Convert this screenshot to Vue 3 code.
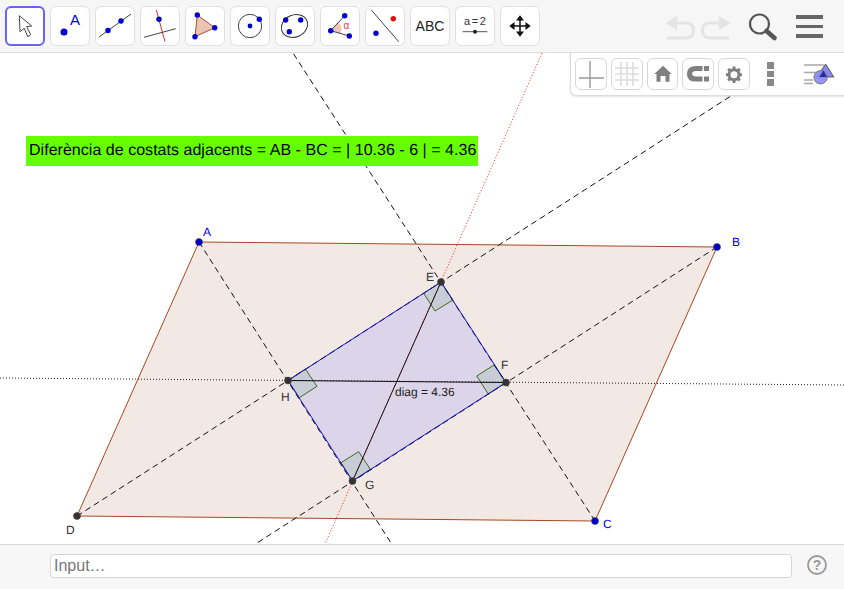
<script setup>
const dashedLines = [
  [77, 516, 843, 24],
  [595, 521, 293, 53],
  [199, 242, 391, 543],
  [717, 247, 257, 543],
]

const rightAngles = [
  '441,282 423.7,293.3 435,311 453,300',
  '506,382.5 494,365 476.7,376 488.3,394',
  '352.5,481 341,462.7 358.7,451.7 370.3,469.3',
  '288,380.5 305.3,369 317,386.3 299.3,397.7',
]

const points = [
  { x: 199, y: 242, color: '#0000cc', name: 'A', lx: 203, ly: 236, text: '#0000e6' },
  { x: 717, y: 247, color: '#0000cc', name: 'B', lx: 732, ly: 246, text: '#0000e6' },
  { x: 595, y: 521, color: '#0000cc', name: 'C', lx: 603, ly: 528, text: '#0000e6' },
  { x: 77, y: 516, color: '#333333', name: 'D', lx: 66, ly: 534, text: '#333333' },
  { x: 441, y: 282, color: '#333333', name: 'E', lx: 426, ly: 281, text: '#333333' },
  { x: 506, y: 382.5, color: '#333333', name: 'F', lx: 501, ly: 369, text: '#333333' },
  { x: 352.5, y: 481, color: '#333333', name: 'G', lx: 365, ly: 489, text: '#333333' },
  { x: 288, y: 380.5, color: '#333333', name: 'H', lx: 281, ly: 401, text: '#333333' },
]
</script>

<template>
  <div class="app">
    <header class="toolbar">
      <div class="tools">
        <button class="tool selected" type="button">
          <svg viewBox="0 0 38 38" width="38" height="38">
            <path d="M13.3 8.7 L14 24.7 L18.3 21.3 L21.7 29.7 L24.7 27.7 L20.7 19.7 L25.7 19 Z" fill="#fff" stroke="#444" stroke-width="1" />
          </svg>
        </button>
        <button class="tool" type="button">
          <svg viewBox="0 0 40 40" width="40" height="40">
            <circle cx="14" cy="26" r="3.5" fill="#0000cc" />
            <text x="20" y="19" class="icon-a">A</text>
          </svg>
        </button>
        <button class="tool" type="button">
          <svg viewBox="0 0 40 40" width="40" height="40">
            <line x1="4" y1="31" x2="36" y2="8" stroke="#444" />
            <circle cx="13" cy="24.5" r="2.7" fill="#0000cc" />
            <circle cx="26" cy="15" r="2.7" fill="#0000cc" />
          </svg>
        </button>
        <button class="tool" type="button">
          <svg viewBox="0 0 40 40" width="40" height="40">
            <line x1="16.3" y1="4" x2="25" y2="35.7" stroke="#e03030" />
            <line x1="4" y1="31.3" x2="35.7" y2="22.7" stroke="#444" />
            <circle cx="19" cy="13.3" r="2.7" fill="#0000cc" />
          </svg>
        </button>
        <button class="tool" type="button">
          <svg viewBox="0 0 40 40" width="40" height="40">
            <polygon points="12.3,9 29.7,21.7 10,30.7" fill="#ecc4b6" stroke="#a5522d" />
            <circle cx="12.3" cy="9" r="2.7" fill="#0000cc" />
            <circle cx="29.7" cy="21.7" r="2.7" fill="#0000cc" />
            <circle cx="10" cy="30.7" r="2.7" fill="#0000cc" />
          </svg>
        </button>
        <button class="tool" type="button">
          <svg viewBox="0 0 40 40" width="40" height="40">
            <circle cx="20" cy="20" r="11.7" fill="none" stroke="#444" />
            <circle cx="20" cy="20" r="2.4" fill="#0000cc" />
            <circle cx="29.3" cy="13.3" r="2.7" fill="#0000cc" />
          </svg>
        </button>
        <button class="tool" type="button">
          <svg viewBox="0 0 40 40" width="40" height="40">
            <ellipse cx="19.5" cy="20" rx="13.5" ry="11" transform="rotate(-25 19.5 20)" fill="none" stroke="#333" />
            <circle cx="10.7" cy="14" r="2.7" fill="#0000cc" />
            <circle cx="25.7" cy="14" r="2.7" fill="#0000cc" />
            <circle cx="14.3" cy="25.7" r="2.7" fill="#0000cc" />
          </svg>
        </button>
        <button class="tool" type="button">
          <svg viewBox="0 0 40 40" width="40" height="40">
            <path d="M10.7 24.7 L18 15.5 A11 11 0 0 1 20.5 27.5 Z" fill="#f2c4bc" />
            <line x1="10.7" y1="24.7" x2="24.7" y2="9.7" stroke="#444" />
            <line x1="10.7" y1="24.7" x2="29.3" y2="30" stroke="#444" />
            <circle cx="10.7" cy="24.7" r="2.7" fill="#0000cc" />
            <circle cx="24.7" cy="9.7" r="2.7" fill="#0000cc" />
            <circle cx="29.3" cy="30" r="2.7" fill="#0000cc" />
            <text x="23.5" y="23" class="icon-alpha">α</text>
          </svg>
        </button>
        <button class="tool" type="button">
          <svg viewBox="0 0 40 40" width="40" height="40">
            <line x1="6.3" y1="4" x2="33.7" y2="35.7" stroke="#444" />
            <circle cx="28.3" cy="12.7" r="2.7" fill="#e01010" />
            <circle cx="11" cy="27.3" r="2.7" fill="#0000cc" />
          </svg>
        </button>
        <button class="tool" type="button"><span class="abc">ABC</span></button>
        <button class="tool" type="button">
          <svg viewBox="0 0 40 40" width="40" height="40">
            <text x="20" y="19" text-anchor="middle" class="icon-slider">a = 2</text>
            <line x1="7.7" y1="25.7" x2="32.3" y2="25.7" stroke="#555" />
            <circle cx="20" cy="25.7" r="2" fill="#222" />
          </svg>
        </button>
        <button class="tool" type="button">
          <svg viewBox="0 0 40 40" width="40" height="40">
            <path d="M20 12 V28 M12 20 H28" stroke="#111" stroke-width="1.5" />
            <path d="M20 9.3 L24 14.5 H16 Z M20 30.7 L24 25.5 H16 Z M9.3 20 L14.5 16 V24 Z M30.7 20 L25.5 16 V24 Z" fill="#111" />
          </svg>
        </button>
      </div>

      <div class="actions">
        <svg class="history" viewBox="0 0 68 28" width="68" height="28">
          <g fill="none" stroke="#e4e4e4" stroke-width="3">
            <path d="M7 10 H22 Q29.5 10 29.5 17.5 Q29.5 25 22 25 H3" />
            <path d="M61 10 H46 Q38.5 10 38.5 17.5 Q38.5 25 46 25 H65" />
          </g>
          <path d="M1.5 10 L13 3 V17 Z M66.5 10 L55 3 V17 Z" fill="#e4e4e4" />
        </svg>
        <svg class="search" viewBox="0 0 32 32" width="32" height="32">
          <circle cx="13.5" cy="12" r="9.5" fill="none" stroke="#555" stroke-width="2.2" />
          <line x1="20.5" y1="19" x2="28.5" y2="26" stroke="#555" stroke-width="4.6" stroke-linecap="round" />
        </svg>
        <div class="menu"><i></i><i></i><i></i></div>
      </div>
    </header>

    <main class="canvas">
      <svg class="board" viewBox="0 53 844 491" width="844" height="491">
        <polygon points="199,242 717,247 595,521 77,516" fill="#f3e9e4" stroke="#a8481f" />
        <polygon points="441,282 506,382.5 352.5,481 288,380.5" fill="#dcd4e8" />
        <polygon v-for="angle in rightAngles" :key="angle" :points="angle" fill="#c8ccd4" stroke="#3d6b1e" />

        <line x1="0" y1="378" x2="844" y2="385" class="dotted" stroke="#222" />
        <line x1="542" y1="53" x2="325" y2="544" class="dotted" stroke="#ee2222" />
        <line v-for="l in dashedLines" :key="l[0]" :x1="l[0]" :y1="l[1]" :x2="l[2]" :y2="l[3]" class="dashed" />
        <polygon points="441,282 506,382.5 352.5,481 288,380.5" fill="none" stroke="#1414c8" />
        <line x1="288" y1="380.5" x2="506" y2="382.5" stroke="#111" />
        <line x1="441" y1="282" x2="352.5" y2="481" stroke="#111" />

        <g v-for="p in points" :key="p.name">
          <circle :cx="p.x" :cy="p.y" r="3.5" :fill="p.color" stroke="#444" stroke-width="0.6" />
          <text :x="p.lx" :y="p.ly" :fill="p.text" class="label">{{ p.name }}</text>
        </g>
        <text x="395" y="396" class="label" fill="#222">diag = 4.36</text>

        <rect x="26" y="136" width="452" height="30" fill="#66ff00" />
        <text x="29" y="155" class="caption">Diferència de costats adjacents = AB - BC = | 10.36 - 6 | = 4.36</text>
      </svg>

      <div class="style-panel">
        <button class="mini" type="button">
          <svg viewBox="0 0 32 32" width="32" height="32"><path d="M15 3 V30 M4 20 H29" stroke="#999" stroke-width="1.4" /></svg>
        </button>
        <button class="mini" type="button">
          <svg viewBox="0 0 32 32" width="32" height="32"><path d="M10 4 V28 M16 4 V28 M22 4 V28 M4 10 H28 M4 16 H28 M4 22 H28" stroke="#ddd" stroke-width="1.6" /></svg>
        </button>
        <button class="mini" type="button">
          <svg viewBox="0 0 32 32" width="32" height="32"><path d="M16 7.7 L24.7 16 H22.5 V23.7 H18.5 V18 H13.5 V23.7 H9.5 V16 H7.3 Z" fill="#808080" /></svg>
        </button>
        <button class="mini" type="button">
          <svg viewBox="0 0 32 32" width="32" height="32">
            <path d="M20.5 10.5 H14 Q7.5 10.5 7.5 15.7 Q7.5 21 14 21 H20.5" fill="none" stroke="#808080" stroke-width="5.2" />
            <path d="M22 7.9 H27 V12.9 H22 Z M22 18.4 H27 V23.4 H22 Z" fill="#808080" />
          </svg>
        </button>
        <button class="mini" type="button">
          <svg viewBox="0 0 32 32" width="32" height="32">
            <circle cx="16" cy="16.7" r="5" fill="none" stroke="#808080" stroke-width="3" />
            <path d="M16 8.5 V12 M16 21.5 V25 M8 16.7 H11.5 M20.5 16.7 H24 M10.2 10.9 L12.8 13.5 M19.2 19.9 L21.8 22.5 M21.8 10.9 L19.2 13.5 M12.8 19.9 L10.2 22.5" stroke="#808080" stroke-width="3" />
          </svg>
        </button>
        <div class="kebab"><i></i><i></i><i></i></div>
        <svg class="style-icon" viewBox="0 0 32 24" width="32" height="24">
          <path d="M0 2 H20 M0 9.5 H13 M0 17 H9 M0 20.5 H9" stroke="#a8a8a8" stroke-width="1.6" />
          <polygon points="21.7,1 30,14 13,14" fill="#8a8af0" stroke="#555" />
          <circle cx="16.7" cy="14.3" r="6.7" fill="#8a8af0" fill-opacity="0.9" stroke="#777" />
          <polygon points="19.5,7.5 23,14 15.5,14" fill="#2a2aa0" />
        </svg>
      </div>
    </main>

    <footer class="inputbar">
      <input class="input" type="text" placeholder="Input…" />
      <svg class="help" viewBox="0 0 22 22" width="22" height="22">
        <circle cx="11" cy="11" r="9" fill="none" stroke="#999" stroke-width="1.8" />
        <text x="11" y="16" text-anchor="middle" class="help-mark">?</text>
      </svg>
    </footer>
  </div>
</template>

<style scoped>
.app {
  width: 844px;
  height: 589px;
  display: flex;
  flex-direction: column;
  overflow: hidden;
  background: #fff;
  font-family: "Liberation Sans", Arial, sans-serif;
}

.toolbar {
  height: 53px;
  box-sizing: border-box;
  flex-shrink: 0;
  display: flex;
  justify-content: space-between;
  padding: 6px 21px 0 5px;
  background: #f6f6f6;
  border-bottom: 1px solid #dcdcdc;
}

.tools {
  display: flex;
  gap: 5px;
}

.tool {
  width: 40px;
  height: 40px;
  padding: 0;
  box-sizing: border-box;
  display: flex;
  align-items: center;
  justify-content: center;
  background: #fff;
  border: 1px solid #e0e0e0;
  border-radius: 6px;
}

.tool svg {
  display: block;
  flex-shrink: 0;
}

.tool.selected {
  border: 2px solid #6a63f5;
}

.icon-a {
  font-size: 15px;
  fill: #0000e0;
  font-family: "Liberation Sans", Arial, sans-serif;
}

.icon-alpha {
  font-size: 10px;
  fill: #e84040;
  font-family: "Liberation Sans", Arial, sans-serif;
}

.icon-slider {
  font-size: 11px;
  fill: #333;
  word-spacing: -1.5px;
  font-family: "Liberation Sans", Arial, sans-serif;
}

.abc {
  font-size: 14px;
  color: #222;
}

.actions {
  display: flex;
  align-items: flex-start;
}

.history {
  margin: 7px 0 0 0;
}

.search {
  margin: 6px 0 0 14px;
}

.menu {
  margin: 9px 0 0 18.5px;
  width: 27px;
  display: flex;
  flex-direction: column;
  gap: 6px;
}

.menu i {
  display: block;
  height: 3.5px;
  background: #666;
}

.canvas {
  position: relative;
  flex: 1;
  min-height: 0;
}

.board {
  display: block;
}

.dashed {
  stroke: #111;
  stroke-dasharray: 6 4;
}

.dotted {
  stroke-dasharray: 1 2;
}

.label {
  font-size: 12px;
  font-family: "Liberation Sans", Arial, sans-serif;
  text-rendering: geometricPrecision;
}

.caption {
  font-size: 16px;
  fill: #000;
  letter-spacing: 0.03px;
  font-family: "Liberation Sans", Arial, sans-serif;
  text-rendering: geometricPrecision;
}

.style-panel {
  position: absolute;
  top: 0;
  right: 0;
  width: 274px;
  height: 43px;
  box-sizing: border-box;
  padding: 5px 8px 0 4px;
  display: flex;
  align-items: flex-start;
  gap: 4px;
  background: #fff;
  border-left: 1px solid #dcdcdc;
  border-bottom: 1px solid #dcdcdc;
  border-bottom-left-radius: 6px;
  box-shadow: 0 1px 2px rgba(0, 0, 0, 0.12);
}

.mini {
  width: 32px;
  height: 32px;
  padding: 0;
  background: #fff;
  border: 1px solid #d8d8d8;
  border-radius: 6px;
  overflow: hidden;
}

.mini svg {
  display: block;
  margin: -1px;
}

.kebab {
  margin: 4px 0 0 13px;
  display: flex;
  flex-direction: column;
  gap: 2px;
}

.kebab i {
  display: block;
  width: 6.5px;
  height: 6.5px;
  background: #888;
}

.style-icon {
  margin: 5px 0 0 26.5px;
}

.inputbar {
  height: 45px;
  box-sizing: border-box;
  flex-shrink: 0;
  display: flex;
  align-items: flex-start;
  padding: 9px 16px 0 50px;
  background: #f7f7f7;
  border-top: 1px solid #d8d8d8;
}

.input {
  width: 742px;
  height: 24px;
  box-sizing: border-box;
  padding: 0 3px;
  border: 1px solid #d5d5d5;
  border-radius: 4px;
  background: #fff;
  font-family: "Liberation Sans", Arial, sans-serif;
  font-size: 16px;
  outline: none;
}

.input::placeholder {
  color: #777;
  opacity: 1;
}

.help {
  margin-left: 14px;
  flex-shrink: 0;
}

.help-mark {
  font-size: 14px;
  font-weight: 700;
  fill: #999;
  font-family: "Liberation Sans", Arial, sans-serif;
}
</style>

<style>
html,
body {
  margin: 0;
  background: #fff;
}
</style>
